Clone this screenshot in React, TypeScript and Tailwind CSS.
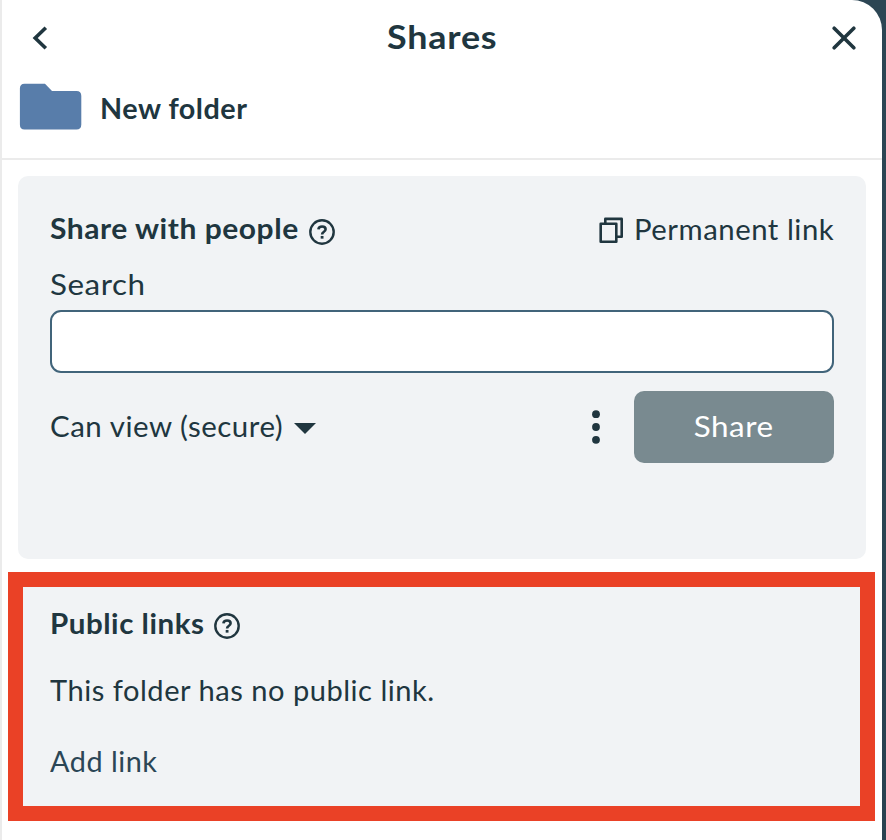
function HelpIcon() {
  return (
    <svg className="h-[26px] w-[26px] shrink-0" viewBox="0 0 26 26" fill="none" stroke="currentColor" strokeWidth="2.4">
      <circle cx="13" cy="13" r="11.7" />
      <path d="M9.400 10.400C9.600 8.500 11 7.500 13.100 7.500c2.100 0 3.500 1.100 3.500 2.800 0 1.300-.8 2-1.900 2.700-1.100.7-1.600 1.300-1.600 2.500" strokeWidth="2.600" />
      <path d="M11.700 18.300h2.800" strokeWidth="2.700" />
    </svg>
  );
}

function Header() {
  return (
    <header className="h-[160px] border-b-2 border-[#ebebeb]">
      <div className="flex h-[76px] items-center justify-between pr-[26px] pl-[30px]">
        <button aria-label="Back" className="flex w-6">
          <svg className="h-6 w-4" viewBox="0 0 16 24" fill="none" stroke="currentColor" strokeWidth="3.600">
            <path d="M13.800 1.800 3.200 12 13.800 22.200" />
          </svg>
        </button>
        <h1 className="mr-[3px] mb-[2px] scale-x-[1.12] text-[32px] leading-[40px] font-bold tracking-[0.7px]">Shares</h1>
        <button aria-label="Close" className="flex w-6">
          <svg className="h-6 w-6" viewBox="0 0 24 24" fill="none" stroke="currentColor" strokeWidth="3.600" strokeLinecap="round">
            <path d="M2.200 2.200 21.800 21.800M21.800 2.200 2.200 21.800" />
          </svg>
        </button>
      </div>
      <div className="flex items-start pt-[7px] pl-[17px]">
        <svg className="h-[48px] w-[64px]" viewBox="0 0 64 48" fill="#587daa">
          <path d="M5.500 0.700H26L33 8.100H57.500Q62.300 8.100 62.300 13V41.500Q62.300 46.600 57.500 46.600H5.500Q0.900 46.600 0.900 41.500V5.500Q0.900 0.700 5.500 0.700Z" />
        </svg>
        <h2 className="mt-[7px] ml-[17px] origin-left scale-x-[1.027] text-[28px] leading-[36px] font-bold tracking-[0.5px]">New folder</h2>
      </div>
    </header>
  );
}

function PeopleSection() {
  return (
    <section className="mx-4 mt-4 h-[383px] rounded-[10px] bg-[#f1f3f5] px-8 pt-[34px]">
      <div className="flex h-[37px] items-start justify-between">
        <div className="flex items-start">
          <h3 className="w-[249px] origin-left scale-x-[1.071] text-[28px] leading-[36px] font-bold tracking-[0.5px] whitespace-nowrap">Share with people</h3>
          <div className="mt-[9px] ml-[10px]"><HelpIcon /></div>
        </div>
        <button className="flex items-start">
          <svg className="mt-[7px] h-[27px] w-[25px]" viewBox="0 0 25 27" fill="none" stroke="currentColor" strokeWidth="2.600" strokeLinejoin="round">
            <path d="M1.700 6.700H17.300V24.700H1.700Z" />
            <path d="M6.300 6.500V1.900H22.700V19.700H17.500" />
          </svg>
          <span className="mt-px ml-[19px] origin-right scale-x-[1.047] text-[28px] leading-[36px] tracking-[0.5px]">Permanent link</span>
        </button>
      </div>
      <label className="mt-[19px] block w-fit origin-left scale-x-[1.12] text-[28px] leading-[36px] tracking-[0.5px]">Search</label>
      <input className="mt-[8px] block h-[63px] w-full rounded-[11px] border-2 border-[#41647a] bg-white px-4 text-[28px] outline-none" />
      <div className="mt-[18px] flex h-[72px] items-center">
        <button className="flex items-center">
          <span className="mb-[2px] w-[233px] origin-left scale-x-[1.052] text-left text-[28px] leading-[36px] tracking-[0.5px] whitespace-nowrap">Can view (secure)</span>
          <svg className="mt-[3px] ml-[11px] h-[11px] w-[22px]" viewBox="0 0 22 11" fill="currentColor">
            <path d="M0 0H22L11 11Z" />
          </svg>
        </button>
        <button aria-label="More options" className="mr-[34px] ml-auto">
          <svg className="h-[34px] w-2" viewBox="0 0 8 34" fill="currentColor">
            <circle cx="4" cy="4.200" r="3.900" />
            <circle cx="4" cy="17" r="3.900" />
            <circle cx="4" cy="29.800" r="3.900" />
          </svg>
        </button>
        <button className="flex h-[72px] w-[200px] items-center justify-center rounded-[10px] bg-[#798a90] pb-[2px] text-[28px] leading-[36px] tracking-[0.5px] text-white">
          <span className="scale-x-[1.12]">Share</span>
        </button>
      </div>
    </section>
  );
}

function LinksSection() {
  return (
    <section className="mt-[13px] mr-[7px] ml-[6px] h-[249px] border-[15px] border-[#ea4126] bg-[#f1f3f5] pt-[18px] pl-[27px]">
      <div className="flex h-[36px] items-start">
        <h3 className="w-[154px] origin-left scale-x-[1.055] text-[28px] leading-[36px] font-bold tracking-[0.5px] whitespace-nowrap">Public links</h3>
        <div className="mt-[8px] ml-[10px]"><HelpIcon /></div>
      </div>
      <p className="mt-[31px] w-fit origin-left scale-x-[1.038] text-[28px] leading-[36px] tracking-[0.5px]">This folder has no public link.</p>
      <button className="mt-[35px] block origin-left scale-x-[1.03] text-[28px] leading-[36px] tracking-[0.5px] text-[#2b4656]">Add link</button>
    </section>
  );
}

export default function App() {
  return (
    <div className="h-[840px] w-[886px] overflow-hidden bg-gradient-to-b from-[#2c4654] to-[#294250] pr-1 font-['Lato',sans-serif] text-[#20363f]">
      <main className="h-full rounded-tr-[30px] border-l-2 border-[#ebebeb] bg-white">
        <Header />
        <PeopleSection />
        <LinksSection />
      </main>
    </div>
  );
}
